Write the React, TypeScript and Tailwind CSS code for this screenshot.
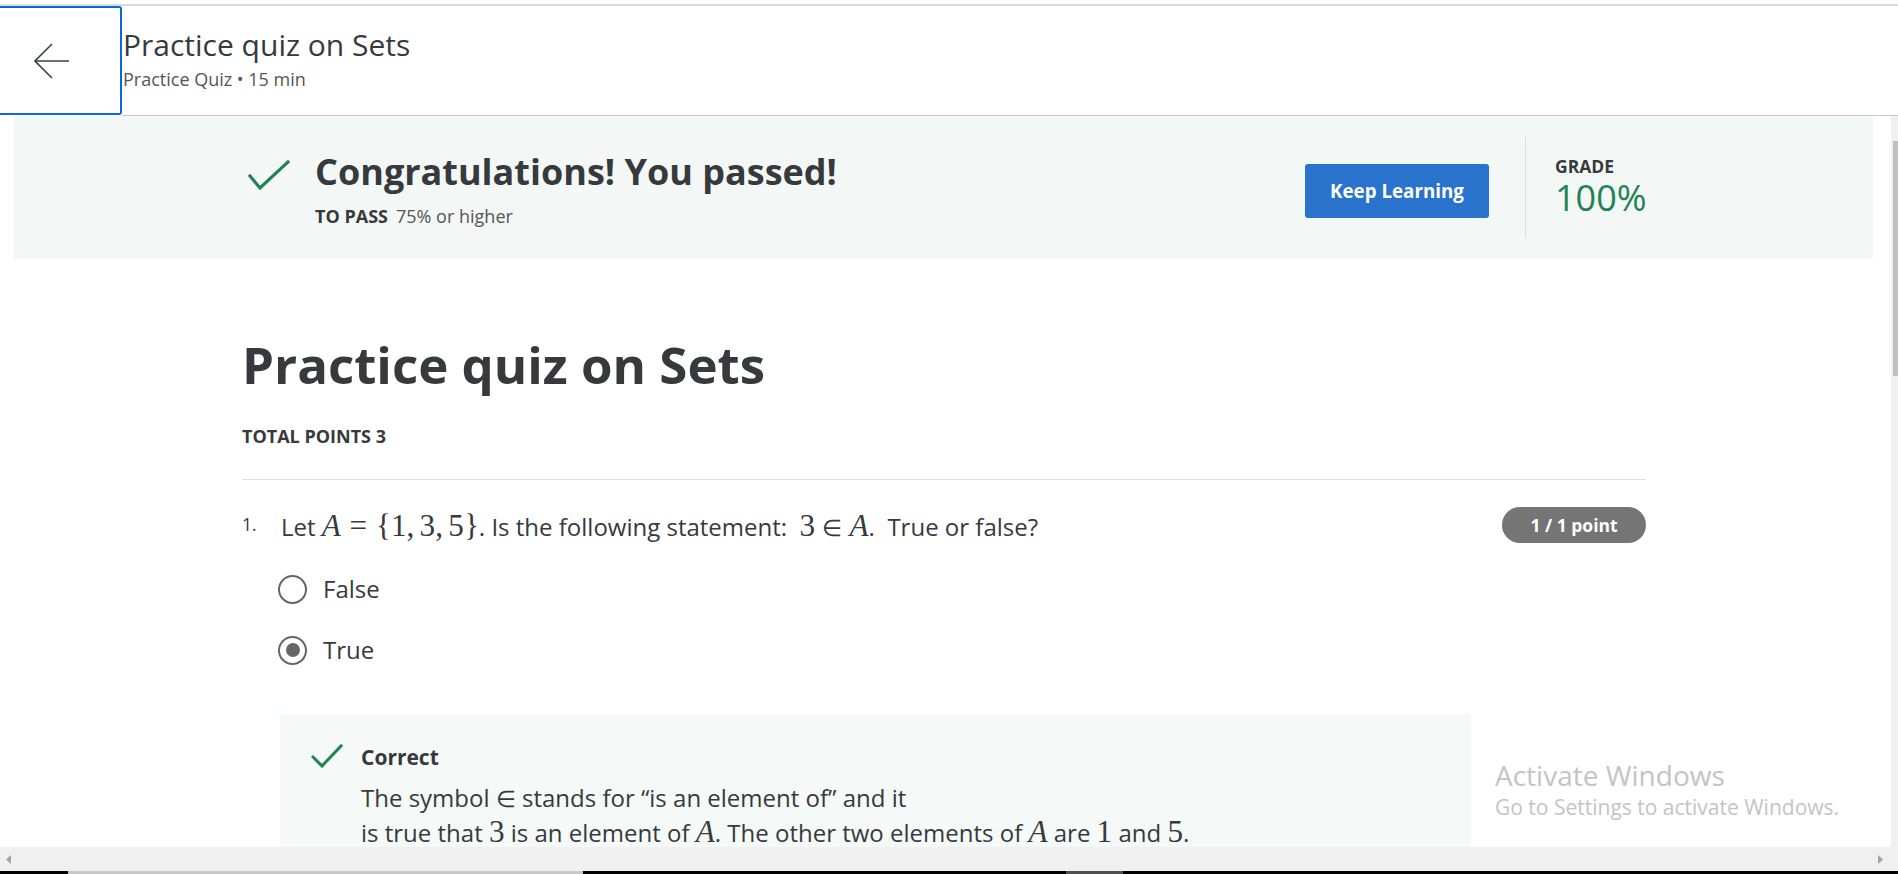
import React from 'react';

const Tick = ({ className }: { className?: string }) => (
    <svg viewBox="0 0 42 31" className={className} fill="none" stroke="#1f8354" strokeWidth="3.2" strokeLinecap="square">
        <path d="M2 16 L12 28 L40 2" />
    </svg>
);

const M = ({ children, italic }: { children: React.ReactNode; italic?: boolean }) => (
    <span className={`font-['Liberation_Serif',serif] text-[1.3em] leading-none ${italic ? 'italic' : ''}`}>{children}</span>
);

const In = () => <span className="font-['Liberation_Serif',serif] text-[0.95em] leading-none">∈</span>;

const Radio = ({ checked, label }: { checked?: boolean; label: string }) => (
    <div className="flex h-[40px] items-center">
        <span className="flex h-[29px] w-[29px] items-center justify-center rounded-full border-[2.5px] border-[#666666]">
            {checked && <span className="h-[14px] w-[14px] rounded-full bg-[#666666]" />}
        </span>
        <span className="ml-[16px] text-[24px] leading-[32px]">{label}</span>
    </div>
);

export default function App() {
    return (
        <div className="relative flex h-[874px] w-[1898px] flex-col overflow-hidden bg-white font-['Open_Sans',sans-serif] text-[#373a3c]">
            <div className="h-[4px] shrink-0 bg-white" />
            <div className="h-[2px] shrink-0 bg-[#dadada]" />

            <header className="flex h-[110px] shrink-0 items-start">
                <button className="flex h-[109px] w-[122px] items-center rounded-r-[3px] border-y-2 border-r-2 border-[#0b68d9] bg-white pl-[34px]">
                    <svg width="36" height="38" viewBox="0 0 36 38" fill="none" stroke="#3c4043" strokeWidth="1.6">
                        <path d="M1 19 H35" />
                        <path d="M18 2 L1 19 L18 36" />
                    </svg>
                </button>
                <div className="flex h-[110px] flex-1 flex-col border-b border-[#c9c9c9] pl-[1px] pt-[21px]">
                    <h1 className="text-[30px] leading-[36px]">Practice quiz on Sets</h1>
                    <p className="mt-[5px] text-[18px] leading-[22px] text-[#555555]">Practice Quiz • 15 min</p>
                </div>
            </header>

            <div className="flex h-[731px] shrink-0">
                <main className="flex-1 overflow-hidden">
                    {/* result banner */}
                    <section className="ml-[14px] mr-[18px] h-[143px] bg-[#f3f8f6] pl-[228px]">
                        <div className="flex w-[1404px] justify-between">
                            <div className="flex items-start pt-[35px]">
                                <Tick className="ml-[6px] mt-[9px] h-[31px] w-[42px]" />
                                <div className="ml-[25px]">
                                    <h2 className="text-[36px] font-bold leading-[42px]">Congratulations! You passed!</h2>
                                    <p className="mt-[11px] text-[18px] leading-[24px]">
                                        <span className="font-bold">TO PASS</span>
                                        <span className="ml-[8px] text-[#555555]">75% or higher</span>
                                    </p>
                                </div>
                            </div>
                            <div className="flex items-start">
                                <button className="mt-[48px] h-[54px] w-[184px] rounded-[3px] bg-[#2a73cc] text-[18.75px] font-bold text-white">
                                    Keep Learning
                                </button>
                                <div className="ml-[36px] mt-[21px] h-[101px] w-px bg-[#dddddd]" />
                                <div className="ml-[29px] mt-[38px] w-[91px]">
                                    <p className="text-[17.5px] font-bold leading-[24px]">GRADE</p>
                                    <p className="text-[36px] leading-[40px] text-[#1f8354]">100%</p>
                                </div>
                            </div>
                        </div>
                    </section>

                    {/* quiz */}
                    <section className="ml-[242px] w-[1404px]">
                        <h1 className="mt-[75px] text-[51px] font-bold leading-[60px]">Practice quiz on Sets</h1>
                        <p className="mt-[30px] text-[18px] font-bold leading-[24px]">TOTAL POINTS 3</p>
                        <div className="mt-[31px] h-px bg-[#e1e1e1]" />

                        <div className="mt-[28px] flex items-start">
                            <span className="w-[39px] text-[17.5px] leading-[32px]">1.</span>
                            <p className="mt-[1px] flex-1 text-[24px] leading-[36px]">
                                Let <M italic>A</M>
                                <M>
                                    <span className="mx-[0.28em]">=</span>
                                    {'{'}1,<span className="ml-[0.17em]" />3,<span className="ml-[0.17em]" />5{'}'}
                                </M>
                                . Is the following statement:&nbsp;&nbsp;<M>3</M>
                                <span className="mx-[0.3em]"><In /></span>
                                <M italic>A</M>.&nbsp;&nbsp;True or false?
                            </p>
                            <span className="-mt-[1px] flex h-[36px] w-[144px] items-center justify-center rounded-full bg-[#757575] text-[17.5px] font-bold text-white">
                                1 / 1 point
                            </span>
                        </div>

                        <div className="ml-[36px] mt-[24px] flex flex-col gap-[21px]">
                            <Radio label="False" />
                            <Radio label="True" checked />
                        </div>

                        <div className="ml-[38px] mt-[44px] h-[200px] w-[1191px] bg-[#f5f9f8] pl-[31px] pt-[29px]">
                            <div className="flex items-start">
                                <svg viewBox="0 0 32 24" className="mt-[1px] h-[24px] w-[32px]" fill="none" stroke="#1f8354" strokeWidth="3" strokeLinecap="square">
                                    <path d="M2 13 L11 22 L30 2" />
                                </svg>
                                <p className="ml-[18px] text-[21px] font-bold leading-[28px]">Correct</p>
                            </div>
                            <div className="ml-[50px] mt-[9px] text-[24px] leading-[35px]">
                                <p>
                                    The symbol <In /> stands for “is an element of” and it
                                </p>
                                <p>
                                    is true that <M>3</M> is an element of <M italic>A</M>. The other two elements of <M italic>A</M> are <M>1</M> and <M>5</M>.
                                </p>
                            </div>
                        </div>
                    </section>
                </main>

                <div className="w-[7px] shrink-0 bg-[#f0f0f0]">
                    <div className="ml-[2px] mt-[25px] h-[235px] w-[5px] bg-[#c1c1c1]" />
                </div>
            </div>

            {/* horizontal scrollbar */}
            <div className="flex h-[24px] shrink-0 items-center justify-between bg-[#f0f0f0] pl-[6px] pr-[15px]">
                <svg width="5" height="9" viewBox="0 0 5 9">
                    <path d="M5 0 L0 4.5 L5 9 Z" fill="#a3a3a3" />
                </svg>
                <svg width="5" height="9" viewBox="0 0 5 9">
                    <path d="M0 0 L5 4.5 L0 9 Z" fill="#a3a3a3" />
                </svg>
            </div>
            <div className="flex h-[3px] shrink-0 bg-black">
                <div className="ml-[68px] w-[515px] bg-[#c8c8c8]" />
                <div className="ml-[483px] w-[57px] bg-[#505050]" />
            </div>

            <div className="absolute left-[1495px] top-[757px] text-[#c4c4c4]">
                <p className="text-[28px] leading-[36px]">Activate Windows</p>
                <p className="text-[21px] leading-[28px]">Go to Settings to activate Windows.</p>
            </div>
        </div>
    );
}
